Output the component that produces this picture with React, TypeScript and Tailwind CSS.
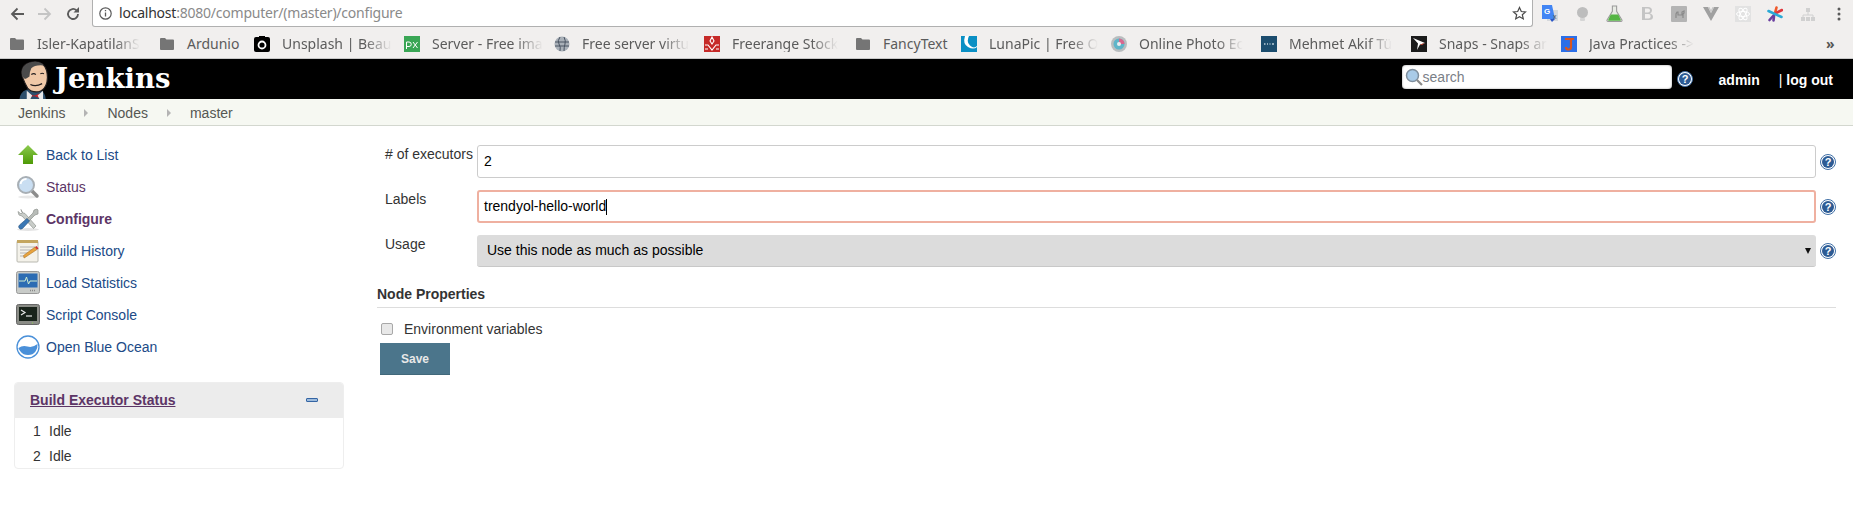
const ubuntu = "font-['Noto_Sans','Open_Sans',sans-serif]";

function Folder() {
  return (
    <svg width="14" height="13" viewBox="0 0 14 13" className="shrink-0">
      <path d="M0 2q0-1 1-1h4l1.500 1.500H13q1 0 1 1V12q0 1-1 1H1q-1 0-1-1z" fill="#757575" />
    </svg>
  );
}

const bookmarkIcons: Record<string, React.ReactNode> = {
  folder: <Folder />,
  camera: (
    <svg width="16" height="16" viewBox="0 0 16 16">
      <rect width="16" height="15" y="1" rx="2" fill="#000" />
      <rect x="5" y="0" width="6" height="3" fill="#000" />
      <circle cx="8" cy="9" r="3.500" fill="none" stroke="#fff" strokeWidth="1.800" />
    </svg>
  ),
  px: (
    <svg width="16" height="16" viewBox="0 0 16 16">
      <rect width="16" height="16" fill="#3aa655" />
      <path d="M2.500 13V6h2.500a2 2 0 0 1 0 4.500H2.500M9 6l4.500 6M13.500 6L9 12" fill="none" stroke="#fff" strokeWidth="1" />
    </svg>
  ),
  globe: (
    <svg width="16" height="16" viewBox="0 0 16 16">
      <circle cx="8" cy="8" r="7.500" fill="#a9b0b8" />
      <path d="M6 1q-3 4-1 7t1 7M10 1q2 4 1 7t-1 7M1 6h14M1 10h14" fill="none" stroke="#4b5563" strokeWidth="1" />
    </svg>
  ),
  freerange: (
    <svg width="16" height="16" viewBox="0 0 16 16">
      <rect width="16" height="16" fill="#c62a28" />
      <path d="M8 1l2 4-2 3-2-3zM1 9h3l4 5 4-5h3M1 13h3M12 13h3" fill="none" stroke="#fff" strokeWidth="1.100" />
    </svg>
  ),
  luna: (
    <svg width="16" height="16" viewBox="0 0 16 16">
      <rect width="16" height="16" fill="#0a8fc4" />
      <path d="M3 0h5Q5 6 9 9.500T16 10v6H8A8 8 0 0 1 3 0z" fill="#fff" />
      <path d="M0 0h4Q1.500 8 7 11t9 0v5H0z" fill="#0a8fc4" />
    </svg>
  ),
  online: (
    <svg width="16" height="16" viewBox="0 0 16 16">
      <circle cx="8" cy="8" r="8" fill="#b9bdbf" />
      <circle cx="8" cy="8" r="5.500" fill="#5fb5c9" />
      <path d="M8 2.500A5.500 5.500 0 0 1 13.500 8H8z" fill="#d9678f" />
      <circle cx="8" cy="8" r="2" fill="#e8eef0" />
    </svg>
  ),
  mehmet: (
    <svg width="16" height="16" viewBox="0 0 16 16">
      <rect width="16" height="16" fill="#1c4d6e" />
      <path d="M3 8h1.500M6 8h1M8.500 8h1M11 8h2" stroke="#b8cbd6" strokeWidth="1.500" />
    </svg>
  ),
  snaps: (
    <svg width="16" height="16" viewBox="0 0 16 16">
      <rect width="16" height="16" fill="#1b1b1b" />
      <path d="M2 2l12 5-5 1.500L6 14l1-6.500z" fill="#fff" />
      <path d="M9 8.500L14 7l-3 2z" fill="#e0452f" />
    </svg>
  ),
  java: (
    <svg width="16" height="16" viewBox="0 0 16 16">
      <rect width="16" height="16" fill="#2c6fe8" />
      <path d="M4 3h9M10 3v8q0 2.500-2.500 2.500T5 11" fill="none" stroke="#d9551f" strokeWidth="2.200" />
    </svg>
  ),
};

// labels stop where the bookmarks bar fades them out
const bookmarks = [
  { icon: "folder", label: "Isler-KapatilanS", w: "w-[150px]", fade: true },
  { icon: "folder", label: "Ardunio", w: "w-[95px]", fade: false },
  { icon: "camera", label: "Unsplash | Beau", w: "w-[150px]", fade: true },
  { icon: "px", label: "Server - Free ima", w: "w-[150px]", fade: true },
  { icon: "globe", label: "Free server virtu", w: "w-[150px]", fade: true },
  { icon: "freerange", label: "Freerange Stock", w: "w-[151px]", fade: true },
  { icon: "folder", label: "FancyText", w: "w-[106px]", fade: false },
  { icon: "luna", label: "LunaPic | Free O", w: "w-[150px]", fade: true },
  { icon: "online", label: "Online Photo Ec", w: "w-[150px]", fade: true },
  { icon: "mehmet", label: "Mehmet Akif Tü", w: "w-[150px]", fade: true },
  { icon: "snaps", label: "Snaps - Snaps ar", w: "w-[150px]", fade: true },
  { icon: "java", label: "Java Practices ->", w: "w-[150px]", fade: true },
];

function Bookmark({ icon, label, w, fade }: { icon: string; label: string; w: string; fade: boolean }) {
  return (
    <div className={`flex h-[16px] shrink-0 items-center ${w}`}>
      <span className="flex w-[16px] shrink-0 justify-center">{bookmarkIcons[icon]}</span>
      <span
        className={`ml-[12px] whitespace-nowrap text-[14px] leading-[16px] text-[#5b5b5b] ${
          fade ? "[mask-image:linear-gradient(to_right,#000_75%,transparent)]" : ""
        }`}
      >
        {label}
      </span>
    </div>
  );
}

function ExtensionIcons() {
  return (
    <div className="ml-[9px] flex h-[16px] items-center">
      <svg width="16" height="17" viewBox="0 0 16 17">
        <rect x="5" y="5" width="11" height="11" fill="#d5d8dc" />
        <path d="M0 0h10l3 14H0z" fill="#4285f4" />
        <path d="M8 14l2 3 3-3z" fill="#2a56c6" />
        <text x="2" y="9" fontSize="8" fontWeight="700" fill="#fff" fontFamily="Liberation Sans">G</text>
        <text x="11" y="14" fontSize="7" fill="#555" fontFamily="Liberation Sans">x</text>
      </svg>
      <svg width="11" height="14" viewBox="0 0 11 14" className="ml-[19px]">
        <circle cx="5.500" cy="5.500" r="5.500" fill="#bdbdbd" />
        <rect x="3" y="11" width="5" height="3" rx="1" fill="#d5d5d5" />
      </svg>
      <svg width="17" height="17" viewBox="0 0 16 16" className="ml-[18px]">
        <path d="M6 1h4v5l5 8q.5 1.500-1 1.500H2q-1.500 0-1-1.500L6 6z" fill="#e8ebe4" stroke="#9a9a9a" />
        <path d="M4.500 9h7l2.500 5q0 .8-1 .8H3q-1 0-1-.8z" fill="#55b544" />
      </svg>
      <svg width="13" height="15" viewBox="0 0 13 15" className="ml-[18px]">
        <path d="M1 1h6q4 0 4 3.500 0 2-2 3 3 .8 3 3.500 0 3-4 3H1zM4 2.500v4h3q2 0 2-2t-2-2zM4 8v4.500h3.500q2.200 0 2.200-2.200T7.500 8z" fill="#c4c4c4" fillRule="evenodd" />
      </svg>
      <svg width="16" height="16" viewBox="0 0 16 16" className="ml-[17px]">
        <rect width="16" height="16" rx="1" fill="#b4b4b4" />
        <path d="M5 12V8l1-2h1v3h4V6l2-1v2l-1 1v4" fill="none" stroke="#8a8a8a" strokeWidth="1.200" />
      </svg>
      <svg width="16" height="14" viewBox="0 0 16 14" className="ml-[16px]">
        <path d="M0 0h5l3 6 3-6h5L8 14z" fill="#a0a0a0" />
        <path d="M5 0l3 6 3-6h-1.500L8 3 6.500 0z" fill="#c8c8c8" />
      </svg>
      <svg width="16" height="16" viewBox="0 0 16 16" className="ml-[16px]">
        <rect width="16" height="16" fill="#e2e2e2" />
        <g fill="none" stroke="#fff" strokeWidth="1">
          <ellipse cx="8" cy="8" rx="6.500" ry="2.500" />
          <ellipse cx="8" cy="8" rx="6.500" ry="2.500" transform="rotate(60 8 8)" />
          <ellipse cx="8" cy="8" rx="6.500" ry="2.500" transform="rotate(120 8 8)" />
        </g>
      </svg>
      <svg width="16" height="16" viewBox="0 0 16 16" className="ml-[16px]">
        <g fill="none" strokeWidth="2.600" strokeLinecap="round">
          <path d="M9.500 1.500L8 7" stroke="#f0592b" />
          <path d="M15 4L9 7" stroke="#e0353b" />
          <path d="M2.500 14L7 9" stroke="#6b3fa0" />
          <path d="M7 10l-.5 4.500" stroke="#6b3fa0" />
          <path d="M1.500 5L14.500 11" stroke="#2aa9d6" />
        </g>
      </svg>
      <svg width="14" height="14" viewBox="0 0 14 14" className="ml-[18px]">
        <rect x="5" y="1" width="4" height="4" fill="#d0d0d0" />
        <path d="M7 5v3M2 11V8h10v3" fill="none" stroke="#d0d0d0" />
        <rect x="0" y="10" width="4" height="4" fill="#d0d0d0" />
        <rect x="5" y="10" width="4" height="4" fill="#d0d0d0" />
        <rect x="10" y="10" width="4" height="4" fill="#d0d0d0" />
      </svg>
      <svg width="4" height="14" viewBox="0 0 4 14" className="ml-[22px]">
        <circle cx="2" cy="2" r="1.500" fill="#5a5a5a" />
        <circle cx="2" cy="7" r="1.500" fill="#5a5a5a" />
        <circle cx="2" cy="12" r="1.500" fill="#5a5a5a" />
      </svg>
    </div>
  );
}

function BrowserChrome() {
  return (
    <div className={`bg-[#f1efee] ${ubuntu}`}>
      <div className="flex h-[27px] items-center pl-[10px]">
        <svg width="14" height="14" viewBox="0 0 14 14">
          <path d="M14 7H2M7.500 1.500L2 7l5.500 5.500" fill="none" stroke="#5a5a5a" strokeWidth="1.800" />
        </svg>
        <svg width="14" height="14" viewBox="0 0 14 14" className="ml-[14px]">
          <path d="M0 7h12M6.500 1.500L12 7l-5.500 5.500" fill="none" stroke="#c4c4c4" strokeWidth="1.800" />
        </svg>
        <svg width="14" height="14" viewBox="0 0 14 14" className="ml-[14px]">
          <path d="M12 7a5 5 0 1 1-1.500-3.600" fill="none" stroke="#5a5a5a" strokeWidth="1.800" />
          <path d="M13 0v5.500H7.500z" fill="#5a5a5a" />
        </svg>
        <div className="ml-[12px] flex h-[27px] w-[1441px] items-center rounded-b-[3px] border border-t-0 border-[#b0b0b0] bg-white pl-[6px] pr-[5px]">
          <svg width="13" height="13" viewBox="0 0 13 13">
            <circle cx="6.500" cy="6.500" r="5.700" fill="none" stroke="#5a5a5a" strokeWidth="1.200" />
            <path d="M6.500 5.500v4M6.500 3v1.300" stroke="#5a5a5a" strokeWidth="1.300" />
          </svg>
          <span className="ml-[7px] text-[14px] leading-[16px] tracking-[-0.22px] text-[#8a8a8a]">
            <span className="text-[#333]">localhost</span>:8080/computer/(master)/configure
          </span>
          <svg width="15" height="15" viewBox="0 0 15 15" className="ml-auto">
            <path d="M7.500 1.500l1.800 4 4.200.4-3.200 2.800 1 4.200-3.800-2.200-3.800 2.200 1-4.200L1.500 5.900l4.200-.4z" fill="none" stroke="#4a4a4a" strokeWidth="1.200" />
          </svg>
        </div>
        <ExtensionIcons />
      </div>
      <div className="flex h-[32px] items-center border-b border-[#c8c8c8] pl-[9px] pt-[2px]">
        {bookmarks.map((b) => (
          <Bookmark key={b.label} {...b} />
        ))}
        <span className="ml-[115px] text-[14px] font-bold leading-[16px] text-[#555]">»</span>
      </div>
    </div>
  );
}

function JenkinsHead() {
  return (
    <svg width="32" height="38" viewBox="0 0 34 42" className="shrink-0">
      <path d="M1 42q1-8 7-10l7-2 9 2q5 2 6 10z" fill="#2d4f6c" />
      <path d="M4 17Q1 3 16 1q12-1 15 10 2 10-1 16-3 6-8 7-8 1-12-4-3-5-6-13z" fill="#f0c9a8" stroke="#231f20" strokeWidth="1.200" />
      <path d="M4 17Q1 3 16 1q8-1 12 4-10-1-14 3-2 4-2 9l-3 2-2 1z" fill="#4a4a4a" />
      <path d="M14 15q3-2 5 0M24 14q2-1 4 0" fill="none" stroke="#231f20" strokeWidth="1.200" />
      <path d="M13 26q6 3 13-1" fill="none" stroke="#231f20" strokeWidth="1.300" />
      <path d="M11 36l5 2 2 0 5-2v5l-5-2h-2l-5 2z" fill="#cc2027" />
      <path d="M9 33l6 5-2 4H9zM27 33l-6 5 2 4h4z" fill="#e8e8e8" />
    </svg>
  );
}

function HelpIcon() {
  return (
    <svg width="16" height="16" viewBox="0 0 16 16" className="shrink-0">
      <circle cx="8" cy="8" r="7.500" fill="#fff" stroke="#3e6ea5" strokeWidth="1" />
      <circle cx="8" cy="8" r="6" fill="#2d5b94" />
      <text x="8" y="12" textAnchor="middle" fontSize="11" fontWeight="700" fill="#fff" fontFamily="Liberation Sans">?</text>
    </svg>
  );
}

function Header() {
  return (
    <div className="flex h-[40px] items-end bg-black pl-[18px]">
      <JenkinsHead />
      <span className="mb-[5px] ml-[5px] font-['DejaVu_Serif',serif] text-[27.500px] font-bold leading-[32px] text-white">Jenkins</span>
      <div className="mb-[10px] ml-auto flex h-[24px] w-[270px] items-center rounded-[4px] bg-white pl-[3px] shadow-[inset_0_0_2px_#888]">
        <svg width="18" height="18" viewBox="0 0 18 18" className="shrink-0">
          <circle cx="7.500" cy="7.500" r="6" fill="#a9cbe8" stroke="#7f8f9e" strokeWidth="1.500" />
          <path d="M12 12l5 5" stroke="#8a8a8a" strokeWidth="2.200" />
        </svg>
        <span className="text-[14px] leading-[16px] text-[#7a8087]">search</span>
      </div>
      <span className="mb-[12px] ml-[5px]">
        <HelpIcon />
      </span>
      <span className="mb-[11px] ml-[26px] text-[14px] font-bold leading-[16px] text-white">admin</span>
      <span className="mb-[11px] ml-[19px] mr-[20px] text-[14px] font-bold leading-[16px] text-white">
        <span className="font-normal">|</span> log out
      </span>
    </div>
  );
}

function Breadcrumbs() {
  const crumbs = ["Jenkins", "Nodes", "master"];
  return (
    <div className="flex h-[27px] items-center border-b border-[#d3d7cf] bg-[#f6f8f2] pl-[18px] pt-[1px] text-[14px] leading-[16px] text-[#555753]">
      {crumbs.map((c, i) => (
        <div key={c} className="flex items-center">
          {i > 0 && (
            <svg width="4" height="8" viewBox="0 0 4 8" className="mx-[19px] shrink-0">
              <path d="M0 0l4 4-4 4z" fill="#b4b4b4" />
            </svg>
          )}
          {c}
        </div>
      ))}
    </div>
  );
}

const taskIcons: Record<string, React.ReactNode> = {
  back: (
    <svg width="24" height="24" viewBox="0 0 24 24">
      <defs>
        <linearGradient id="arrowGreen" x1="0" y1="0" x2="0" y2="1">
          <stop offset="0" stopColor="#8ccb4f" />
          <stop offset="1" stopColor="#4e9a06" />
        </linearGradient>
      </defs>
      <path d="M12 2l10 10h-5v9H7v-9H2z" fill="url(#arrowGreen)" />
    </svg>
  ),
  status: (
    <svg width="24" height="24" viewBox="0 0 24 24">
      <ellipse cx="12" cy="22" rx="10" ry="1.500" fill="#e8e8e8" />
      <path d="M15 15l6 6" stroke="#8c8c8c" strokeWidth="3.500" strokeLinecap="round" />
      <circle cx="10" cy="10" r="8" fill="#c9def2" stroke="#a8afb5" strokeWidth="2" />
      <path d="M4.500 9a6 6 0 0 1 6-5" fill="none" stroke="#fff" strokeWidth="2" />
    </svg>
  ),
  configure: (
    <svg width="24" height="24" viewBox="0 0 24 24">
      <ellipse cx="12" cy="22.500" rx="11" ry="1.500" fill="#e4e4e4" />
      <path d="M5 2.500l1 3 3 1 11 12.500-2.500 2.500L6 9 3 8 2 4.500l3 2.500 1.500-1.500z" fill="#c9cdc9" stroke="#8f938f" strokeWidth=".7" />
      <path d="M22 3l-1-1-3 1-1 3-6 6 2 2 6-6 3-1z" fill="#b8bcb8" stroke="#8f938f" strokeWidth=".7" />
      <path d="M11 11.500l2.500 2.500-7 7.500q-2 1.500-3.500-.5-1-1.500.5-3z" fill="#3b78b5" stroke="#29547f" strokeWidth=".6" />
    </svg>
  ),
  history: (
    <svg width="24" height="24" viewBox="0 0 24 24">
      <rect x="1" y="2" width="21" height="21" rx="1" fill="#f4f2ea" stroke="#b8b8b0" />
      <rect x="1" y="1" width="21" height="3" fill="#c4a660" />
      <path d="M4 8h15M4 11h15M4 14h9M4 17h6" stroke="#b4b4b4" />
      <path d="M8 19l-.5-2.500L19 8l2 2.500-12 8z" fill="#e8a33d" stroke="#a06a20" strokeWidth=".5" />
      <path d="M19 8l1.500-1 2 2.500-1.500 1z" fill="#cc2f2f" />
    </svg>
  ),
  load: (
    <svg width="24" height="24" viewBox="0 0 24 24">
      <rect x="0.500" y="0.500" width="23" height="22" rx="2" fill="#c8cbc8" stroke="#999" />
      <rect x="2.500" y="2.500" width="19" height="14" fill="#2c6cb3" />
      <path d="M3 10h6l1.500-4 2 7 1.500-3h7" fill="none" stroke="#cfeccf" strokeWidth="1" />
      <path d="M14 19.500h6" stroke="#888" strokeDasharray="1 1" strokeWidth="1.500" />
    </svg>
  ),
  script: (
    <svg width="24" height="24" viewBox="0 0 24 24">
      <rect x="0.500" y="1.500" width="23" height="20" rx="2" fill="#8a8c86" stroke="#666" />
      <rect x="3" y="4" width="18" height="14" fill="#18231a" />
      <path d="M5 7l4 2.500L5 12" fill="none" stroke="#e8e8e8" strokeWidth="1.200" />
      <path d="M10 13h6" stroke="#e8e8e8" strokeWidth="1.200" />
      <path d="M16 20h1" stroke="#8fd14f" />
    </svg>
  ),
  ocean: (
    <svg width="24" height="24" viewBox="0 0 24 24">
      <circle cx="12" cy="12" r="11" fill="#fff" stroke="#4a90d9" strokeWidth="1.300" />
      <path d="M2.500 13q4-3 9-1.500T21.500 9q.5 4-2 7.500T12 20q-5 0-7.500-3.500T2.500 13z" fill="#4a90d9" />
    </svg>
  ),
};

const tasks = [
  { icon: "back", label: "Back to List", cls: "text-[#204a87]" },
  { icon: "status", label: "Status", cls: "text-[#5c3566]" },
  { icon: "configure", label: "Configure", cls: "font-bold text-[#5c3566]" },
  { icon: "history", label: "Build History", cls: "text-[#204a87]" },
  { icon: "load", label: "Load Statistics", cls: "text-[#204a87]" },
  { icon: "script", label: "Script Console", cls: "text-[#204a87]" },
  { icon: "ocean", label: "Open Blue Ocean", cls: "text-[#204a87]" },
];

function Sidebar() {
  return (
    <div className="w-[377px] shrink-0 pl-[14px] pt-[13px]">
      <div className="flex flex-col pl-[2px]">
        {tasks.map((t) => (
          <div key={t.label} className="flex h-[32px] items-center">
            {taskIcons[t.icon]}
            <span className={`ml-[6px] text-[14px] leading-[16px] ${t.cls}`}>{t.label}</span>
          </div>
        ))}
      </div>
      <div className="mt-[19px] w-[330px] overflow-hidden rounded-[4px] border border-[#eeeeee]">
        <div className="flex h-[35px] items-center bg-[#ececec] pb-[1px] pl-[15px] pr-[25px]">
          <span className="text-[14px] font-bold leading-[16px] text-[#5c3566] underline">Build Executor Status</span>
          <span className="ml-auto block h-[4px] w-[12px] rounded-[1px] border border-[#3465a4] bg-[#9dbbdc]" />
        </div>
        <div className="flex h-[50px] flex-col pt-[1px] text-[14px] leading-[25px] text-[#333]">
          {[1, 2].map((n) => (
            <div key={n} className="flex pl-[18px]">
              <span className="w-[16px]">{n}</span>
              <span>Idle</span>
            </div>
          ))}
        </div>
      </div>
    </div>
  );
}

function Form() {
  return (
    <div className="flex-1 pr-[17px] pt-[19px] text-[14px] text-[#333]">
      <div className="grid grid-cols-[88px_minmax(0,1fr)_16px] items-start gap-x-[4px] gap-y-[12px] pl-[8px]">
        <span className="mt-[1px] whitespace-nowrap leading-[16px]">
          # of executors
        </span>
        <div className="flex h-[33px] items-center rounded-[3px] border border-[#cccccc] bg-white pl-[6px] text-black">2</div>
        <span className="mt-[9px]"><HelpIcon /></span>

        <span className="mt-[1px] leading-[16px]">Labels</span>
        <div className="flex h-[33px] items-center rounded-[3px] border-2 border-[#efb0a0] bg-white pl-[5px] text-black">
          trendyol-hello-world
          <span className="h-[16px] w-px bg-black" />
        </div>
        <span className="mt-[9px]"><HelpIcon /></span>

        <span className="mt-[1px] leading-[16px]">Usage</span>
        <div className="flex h-[32px] items-center rounded-[3px] border-b border-[#c8c8c8] bg-[#dcdcdc] pl-[10px] pr-[5px] text-black">
          Use this node as much as possible
          <svg width="6" height="6" viewBox="0 0 6 6" className="ml-auto">
            <path d="M0 0h6L3 6z" fill="#111" />
          </svg>
        </div>
        <span className="mt-[8px]"><HelpIcon /></span>
      </div>

      <div className="mt-[19px] border-b border-[#dddddd] pb-[5px] font-bold leading-[16px]">Node Properties</div>

      <div className="mt-[13px] flex h-[16px] items-center pl-[4px]">
        <span className="block h-[12px] w-[12px] rounded-[2px] border border-[#a8a8a8] bg-[#e8e8e8]" />
        <span className="ml-[11px] leading-[16px]">Environment variables</span>
      </div>

      <div className="ml-[3px] mt-[6px] flex h-[32px] w-[70px] items-center justify-center border-b border-[#41687a] bg-[#4b758b] text-[12px] font-bold text-[#e8e8e8]">
        Save
      </div>
    </div>
  );
}

export default function App() {
  return (
    <div className="h-[527px] overflow-hidden bg-white font-['Liberation_Sans',sans-serif]">
      <BrowserChrome />
      <Header />
      <Breadcrumbs />
      <div className="flex">
        <Sidebar />
        <Form />
      </div>
    </div>
  );
}
